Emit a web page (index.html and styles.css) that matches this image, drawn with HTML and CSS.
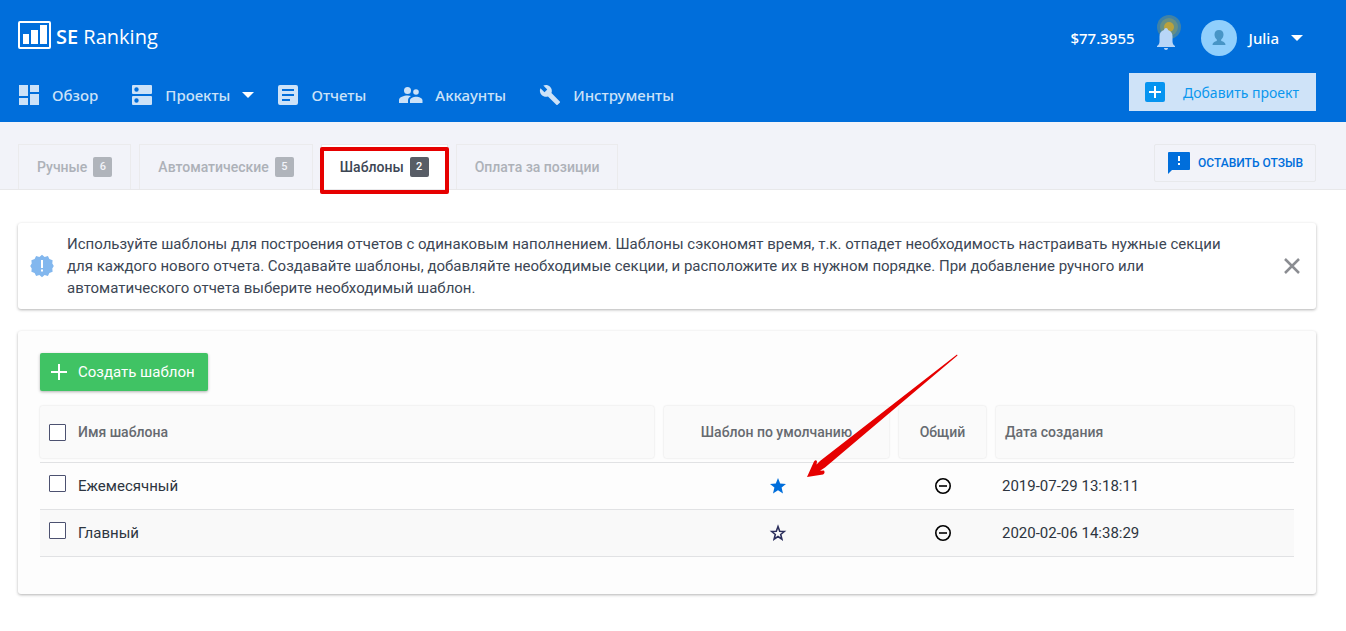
FILE: index.html
```html
<!DOCTYPE html>
<html lang="ru">

<head>
    <meta charset="UTF-8">
    <meta name="viewport" content="width=device-width, initial-scale=1.0">
    <title>SE Ranking - Шаблоны</title>
    <link rel="stylesheet" href="styles.css">
</head>

<body>
    <header class="header">
        <div class="header-top">
            <a class="logo" href="#">
                <svg width="34" height="28" viewBox="0 0 34 28">
                    <rect x="1" y="1" width="31" height="26" rx="1" fill="none" stroke="#fff" stroke-width="2" />
                    <path d="M5 13h6v10H5zM13 9h7v14h-7zM22 4h7v19h-7z" fill="#fff" />
                </svg>
                <span><b>SE</b> Ranking</span>
            </a>
            <div class="account">
                <span class="balance">$77.3955</span>
                <button class="bell" type="button" aria-label="Уведомления">
                    <svg width="26" height="38" viewBox="0 0 26 38">
                        <circle cx="14" cy="13" r="12" fill="#ffc107" opacity=".25" />
                        <circle cx="14" cy="13" r="9" fill="#ffc107" opacity=".2" />
                        <circle cx="14" cy="13" r="5" fill="#ffb300" opacity=".55" />
                        <path d="M11 14c1 0 2 .8 2 2 3.200 .8 4.500 3.500 4.500 6.500v5c0 2 1 3.500 2.500 4.500v1H2v-1c1.500-1 2.500-2.500 2.500-4.500v-5c0-3 1.300-5.700 4.500-6.500 0-1.200 1-2 2-2zM9 34h4c0 1.300-1 2-2 2s-2-.7-2-2z" fill="#b8d6f7" />
                    </svg>
                </button>
                <button class="user" type="button">
                    <svg width="36" height="36" viewBox="0 0 36 36">
                        <circle cx="18" cy="18" r="18" fill="#90cffc" />
                        <path d="M18 10c3 0 4.500 2 4.500 4.500 0 2.200-1 4-2.300 5v1.500c2.600.7 4.300 1.700 4.300 4h-13c0-2.300 1.700-3.300 4.300-4v-1.500c-1.300-1-2.300-2.800-2.300-5 0-2.500 1.500-4.500 4.500-4.500z" fill="#4795c6" />
                    </svg>
                    <span>Julia</span>
                    <svg width="12" height="6" viewBox="0 0 12 6"><path d="M0 0h12L6 6z" fill="#fff" /></svg>
                </button>
            </div>
        </div>
        <div class="header-bottom">
            <nav class="menu">
                <a href="#">
                    <svg width="22" height="22" viewBox="0 0 22 22"><path d="M1 1h9v11H1zM12 1h9v7h-9zM1 14h9v7H1zM12 10h9v11h-9z" /></svg>
                    <span>Обзор</span>
                </a>
                <a href="#">
                    <svg width="22" height="22" viewBox="0 0 22 22"><path fill-rule="evenodd" d="M2 1h18q1 0 1 1v7q0 1-1 1H2q-1 0-1-1V2q0-1 1-1zM5.500 3.300a2.200 2.200 0 1 0 0 4.400 2.200 2.200 0 0 0 0-4.400zM2 12h18q1 0 1 1v7q0 1-1 1H2q-1 0-1-1v-7q0-1 1-1zM5.500 14.300a2.200 2.200 0 1 0 0 4.400 2.200 2.200 0 0 0 0-4.400z" /></svg>
                    <span>Проекты</span>
                    <svg class="caret" width="12" height="6" viewBox="0 0 12 6"><path d="M0 0h12L6 6z" /></svg>
                </a>
                <a href="#">
                    <svg width="22" height="22" viewBox="0 0 22 22"><path fill-rule="evenodd" d="M3 1h16q2 0 2 2v16q0 2-2 2H3q-2 0-2-2V3q0-2 2-2zM5 5v2h12V5zM5 10v2h12v-2zM5 15v2h8v-2z" /></svg>
                    <span>Отчеты</span>
                </a>
                <a href="#">
                    <svg width="24" height="22" viewBox="0 0 24 22"><circle cx="8.500" cy="6.500" r="3.500" /><circle cx="17" cy="8" r="2.800" /><path d="M0 19v-3c0-3 5-4.500 8.500-4.500 1.200 0 2.400.2 3.500.5-2 1.200-3 2.500-3 4.500V19zM11 19v-2.500c0-2.500 3.500-3.700 6.200-3.700s6.300 1.200 6.300 3.700V19z" /></svg>
                    <span>Аккаунты</span>
                </a>
                <a href="#">
                    <svg width="22" height="22" viewBox="0 0 24 24"><path d="M22.700 19l-9.100-9.100c.9-2.300.4-5-1.500-6.900-2-2-5-2.400-7.400-1.300L9 6 6 9 1.600 4.700C.4 7.100.9 10.100 2.900 12.100c1.900 1.900 4.600 2.400 6.900 1.500l9.100 9.100c.4.4 1 .4 1.400 0l2.300-2.300c.5-.4.500-1.100.1-1.400z" /></svg>
                    <span>Инструменты</span>
                </a>
            </nav>
            <button class="add-project" type="button">
                <svg width="20" height="20" viewBox="0 0 20 20"><rect width="20" height="20" rx="2" fill="#0694f0" /><path d="M10 4v12M4 10h12" stroke="#fff" stroke-width="2" /></svg>
                <span>Добавить проект</span>
            </button>
        </div>
    </header>

    <div class="subheader">
        <nav class="tabs">
            <a class="tab" href="#">Ручные <span class="count">6</span></a>
            <a class="tab" href="#">Автоматические <span class="count">5</span></a>
            <a class="tab active" href="#">Шаблоны <span class="count">2</span></a>
            <a class="tab" href="#">Оплата за позиции</a>
        </nav>
        <button class="feedback" type="button">
            <svg width="22" height="22" viewBox="0 0 22 22"><path d="M1 0h20q1 0 1 1v16q0 1-1 1H4l-4 4V1q0-1 1-1z" fill="#006edb" /><path d="M10 4h2v5h-2zM10 11h2v2h-2z" fill="#fff" /></svg>
            <span>Оставить отзыв</span>
        </button>
    </div>

    <main class="content">
        <section class="card info">
            <svg class="info-icon" width="24" height="24" viewBox="0 0 24 24">
                <path d="M12 .8l2.600 2.100 3.300-.8 1.500 3 3.200 1.200-.3 3.300 1.500 2.400-1.500 2.400.3 3.300-3.200 1.200-1.500 3-3.300-.8L12 23.200l-2.600-2.100-3.300.8-1.500-3-3.200-1.200.3-3.300L.2 12l1.500-2.400-.3-3.300 3.200-1.200 1.500-3 3.300.8z" fill="#82b7ee" />
                <path d="M11 6h2v8h-2zM11 15.500h2v2h-2z" fill="#fff" />
            </svg>
            <p>Используйте шаблоны для построения отчетов с одинаковым наполнением. Шаблоны сэкономят время, т.к. отпадет необходимость настраивать нужные секции<br>
                для каждого нового отчета. Создавайте шаблоны, добавляйте необходимые секции, и расположите их в нужном порядке. При добавление ручного или<br>
                автоматического отчета выберите необходимый шаблон.</p>
            <button class="close" type="button" aria-label="Закрыть">
                <svg width="16" height="16" viewBox="0 0 16 16"><path d="M1 1l14 14M15 1L1 15" stroke="#8b8d92" stroke-width="2.500" /></svg>
            </button>
        </section>

        <section class="card templates">
            <button class="create" type="button">
                <svg width="16" height="16" viewBox="0 0 16 16"><path d="M8 0v16M0 8h16" stroke="#fff" stroke-width="2" /></svg>
                <span>Создать шаблон</span>
            </button>
            <table>
                <colgroup>
                    <col>
                    <col class="col-default">
                    <col class="col-shared">
                    <col class="col-date">
                </colgroup>
                <thead>
                    <tr>
                        <th><label class="head"><input type="checkbox">Имя шаблона</label></th>
                        <th><div class="head center">Шаблон по умолчанию</div></th>
                        <th><div class="head center">Общий</div></th>
                        <th><div class="head">Дата создания</div></th>
                    </tr>
                </thead>
                <tbody>
                    <tr>
                        <td><label class="name"><input type="checkbox">Ежемесячный</label></td>
                        <td class="icon star"><svg width="18" height="18" viewBox="0 0 18 18"><path d="M9 1l2.200 5.500 5.800.4-4.400 3.700L14 16.500 9 13.300l-5 3.200 1.400-5.900L1 6.900l5.800-.4z" fill="#006edb" /></svg></td>
                        <td class="icon"><svg width="18" height="18" viewBox="0 0 18 18"><circle cx="9" cy="9" r="7.200" fill="none" stroke="#000" stroke-width="1.600" /><path d="M5 9h8" stroke="#000" stroke-width="1.600" /></svg></td>
                        <td>2019-07-29 13:18:11</td>
                    </tr>
                    <tr>
                        <td><label class="name"><input type="checkbox">Главный</label></td>
                        <td class="icon star"><svg width="18" height="18" viewBox="0 0 18 18"><path d="M9 2.500l1.700 4.700 4.600.3-3.600 3 1.200 4.600L9 12.500l-3.900 2.600 1.200-4.600-3.600-3 4.600-.3z" fill="none" stroke="#2c2f5c" stroke-width="1.600" /></svg></td>
                        <td class="icon"><svg width="18" height="18" viewBox="0 0 18 18"><circle cx="9" cy="9" r="7.200" fill="none" stroke="#000" stroke-width="1.600" /><path d="M5 9h8" stroke="#000" stroke-width="1.600" /></svg></td>
                        <td>2020-02-06 14:38:29</td>
                    </tr>
                </tbody>
            </table>
            <svg class="arrow" width="154" height="126" viewBox="0 0 154 126">
                <path d="M152 1.500L15 108l-3.500 3.500.5-3q-1-2.500-3 0L2 124l16-2.500q2.500-1.500 1-4l-4 .3 5-3.300L152.500 2.500z" fill="#e60000" />
            </svg>
        </section>
    </main>
</body>

</html>
```
FILE: styles.css
```css
* {
    box-sizing: border-box;
}

body {
    margin: 0;
    font-family: Roboto, sans-serif;
    font-size: 16px;
    color: #2d3540;
    background: #fff;
}

button {
    border: none;
    background: none;
    padding: 0;
    font: inherit;
    color: inherit;
    cursor: pointer;
}

a {
    color: inherit;
    text-decoration: none;
}

svg {
    display: block;
    flex: none;
}

.header {
    background: #006edb;
    color: #fff;
    font-family: "Noto Sans", sans-serif;
    padding: 14px 30px 11px 18px;
}

.header-top,
.header-bottom {
    display: flex;
    justify-content: space-between;
    align-items: center;
}

.header-top {
    height: 48px;
}

.header-bottom {
    margin-top: 11px;
    height: 38px;
}

.logo {
    display: flex;
    gap: 4px;
    padding-bottom: 2px;
    font-family: "Open Sans", sans-serif;
    font-size: 20px;
    font-weight: 500;
    line-height: 32px;
}

.logo b {
    font-weight: 600;
}

.account {
    display: flex;
    align-items: center;
    font-size: 15px;
    font-weight: 500;
}

.bell {
    margin: 0 20px 10px;
}

.user {
    display: flex;
    align-items: center;
    gap: 12px;
    margin-right: 13px;
}

.menu {
    display: flex;
    gap: 33px;
    padding-top: 5px;
    color: #cce2f8;
    font-size: 15px;
    font-weight: 500;
}

.menu a {
    display: flex;
    align-items: center;
    gap: 12px;
}

.menu svg {
    fill: #cce2f8;
}

.menu .caret {
    margin-right: -10px;
    fill: #fff;
}

.add-project {
    display: flex;
    align-items: center;
    gap: 18px;
    height: 38px;
    padding: 0 17px 0 16px;
    background: #cfe3f8;
    color: #0b97ee;
    font-size: 14px;
}

.subheader {
    display: flex;
    justify-content: space-between;
    align-items: flex-start;
    padding: 22px 30px 0 18px;
    background: #f2f3f9;
    border-bottom: 1px solid #e8e8ea;
}

.tabs {
    display: flex;
    gap: 8px;
    font-size: 14px;
    font-weight: 500;
    color: #adb1b8;
}

.tab {
    display: flex;
    align-items: center;
    gap: 6px;
    height: 45px;
    padding: 0 18px;
    border: 1px solid #ebebed;
    border-bottom: none;
}

.count {
    width: 19px;
    border-radius: 2px;
    background: #b0b4bb;
    color: #f2f3f9;
    font-size: 11px;
    line-height: 20px;
    text-align: center;
}

.tab.active {
    position: relative;
    background: #fff;
    color: #3c4654;
}

.active .count {
    background: #585d66;
    color: #fff;
}

.tab.active::after {
    content: "";
    position: absolute;
    top: 2px;
    right: -2px;
    bottom: -5px;
    left: -2px;
    border: 4px solid #e60000;
    border-radius: 2px;
}

.feedback {
    display: flex;
    align-items: center;
    gap: 8px;
    height: 38px;
    padding: 0 12px 0 13px;
    border: 1px solid #e8e9ec;
    border-radius: 2px;
    color: #006edb;
    font-size: 12px;
    font-weight: 500;
    text-transform: uppercase;
}

.content {
    padding: 33px 30px 30px 18px;
}

.card {
    border-radius: 3px;
    box-shadow: 0 1px 3px rgba(0, 0, 0, 0.3);
}

.info {
    display: flex;
    align-items: center;
    padding: 10px 16px 10px 12px;
    color: #3c4654;
    font-size: 15px;
    line-height: 22px;
}

.info p {
    flex: 1;
    margin: 0 24px 0 13px;
}

.templates {
    position: relative;
    margin-top: 22px;
    padding: 22px 22px 37px;
    background: #fdfdfd;
}

.create {
    display: flex;
    align-items: center;
    gap: 11px;
    height: 38px;
    padding: 0 13px 0 11px;
    border-radius: 2px;
    background: #40c364;
    color: #fff;
    font-size: 15px;
    box-shadow: 0 1px 3px rgba(0, 0, 0, 0.3);
}

table {
    width: 100%;
    margin-top: 15px;
    border-collapse: collapse;
    table-layout: fixed;
    font-size: 15px;
}

.col-default {
    width: 235px;
}

.col-shared {
    width: 97px;
}

.col-date {
    width: 303px;
}

th {
    padding: 0 5px 4px;
    text-align: left;
    font-size: 14px;
    font-weight: 500;
    color: #666a70;
}

th:first-child {
    padding-left: 0;
}

th:last-child {
    padding-right: 0;
}

.head {
    display: flex;
    align-items: center;
    height: 52px;
    padding: 0 9px;
    background: #fafafa;
    border-radius: 2px;
    box-shadow: 0 0 2px rgba(0, 0, 0, 0.15);
}

.center {
    justify-content: center;
}

td {
    height: 47px;
    padding: 0 9px 0 11px;
    border-top: 1px solid #e1e2e4;
    border-bottom: 1px solid #e1e2e4;
}

td:first-child {
    padding-left: 9px;
}

tbody tr:nth-child(even) {
    background: #f9f9f9;
}

.name {
    display: flex;
    align-items: flex-start;
    line-height: 22px;
}

.icon {
    padding: 0;
}

.icon svg {
    margin: 0 auto;
}

.star {
    padding-left: 3px;
}

input[type="checkbox"] {
    appearance: none;
    flex: none;
    width: 17px;
    height: 17px;
    margin: 0 12px 0 0;
    border: 1px solid #4c5170;
    border-radius: 1px;
    background: #fff;
}

.arrow {
    position: absolute;
    top: 22px;
    right: 357px;
}
```
